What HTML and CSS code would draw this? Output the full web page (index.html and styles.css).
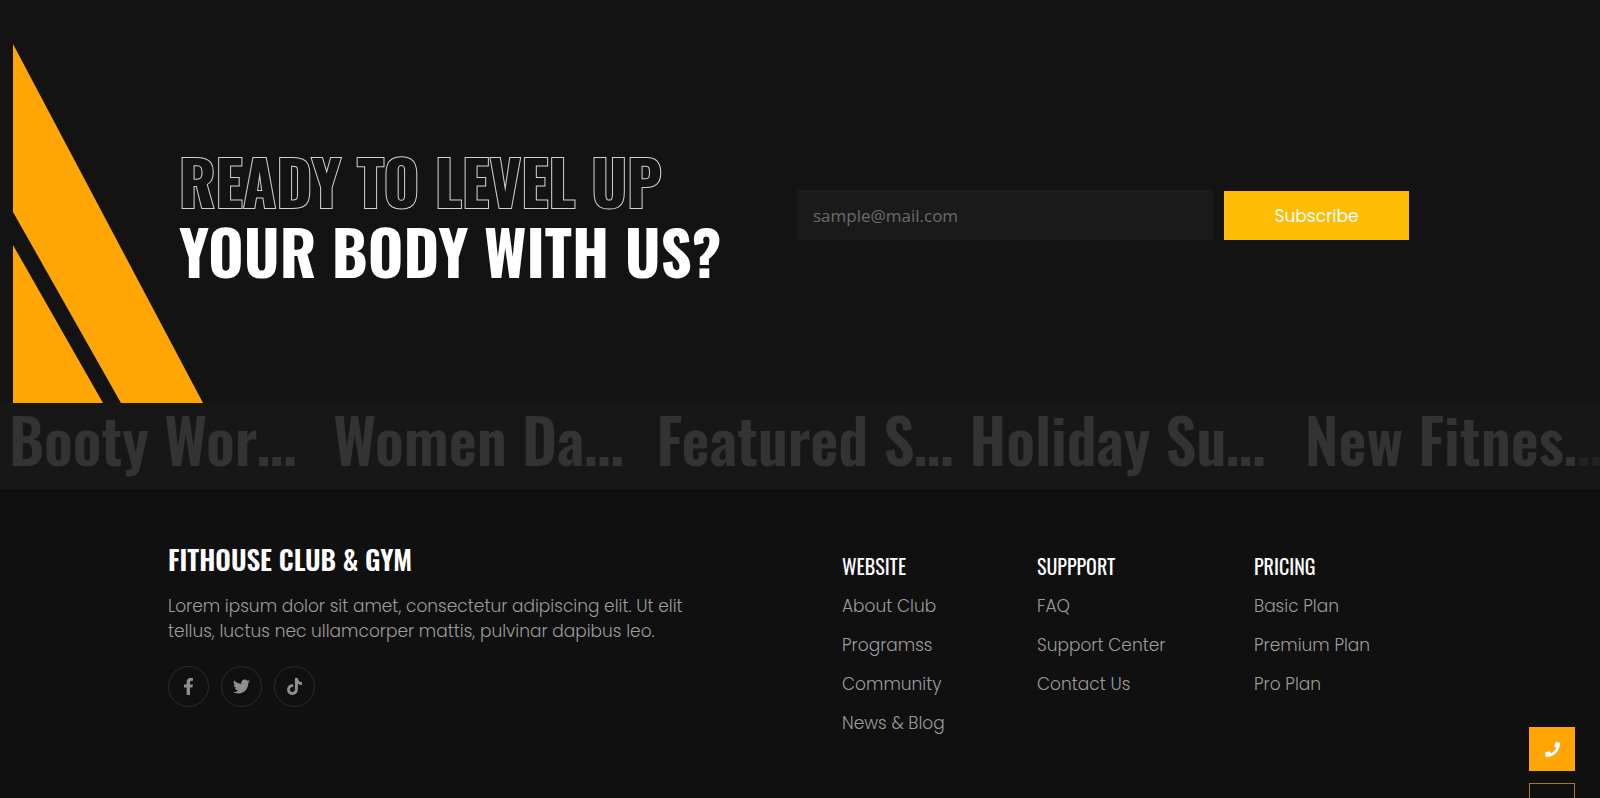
FILE: index.html
```
<!DOCTYPE html>
<html lang="en">
<head>
<meta charset="utf-8">
<title>Fithouse Club &amp; Gym</title>
<link rel="stylesheet" href="styles.css">
</head>
<body>
<section class="cta">
  <svg class="cta-shape" viewBox="0 0 190 359" aria-hidden="true"><path d="M0 0 190 359H108L0 168Z M0 201 90 359H0Z" fill="#ffa605"/></svg>
  <h2 class="cta-title"><span class="outline">READY TO LEVEL UP</span><span>YOUR BODY WITH US?</span></h2>
  <form class="cta-form">
    <input class="email" type="email" placeholder="sample@mail.com" aria-label="Email address">
    <button class="subscribe" type="submit">Subscribe</button>
  </form>
</section>
<div class="ticker">
  <span>Booty Wor…</span><span>Women Da…</span><span>Featured S…</span><span>Holiday Su…</span><span>New Fitnes…</span>
</div>
<footer class="footer">
  <div class="about">
    <h3 class="brand">FITHOUSE CLUB &amp; GYM</h3>
    <p class="blurb">Lorem ipsum dolor sit amet, consectetur adipiscing elit. Ut elit tellus, luctus nec ullamcorper mattis, pulvinar dapibus leo.</p>
    <div class="social">
      <a href="#" aria-label="Facebook"><svg viewBox="0 0 320 512" width="17" height="17"><path d="M279 288l14-93h-89v-60c0-25 12-50 52-50h41V7s-37-7-72-7c-73 0-121 44-121 125v70H23v93h81v224h100V288z"/></svg></a>
      <a href="#" aria-label="Twitter"><svg viewBox="0 0 512 512" width="17" height="17"><path d="M459 152c0 4 0 9 0 14 0 138-106 298-298 298-59 0-115-17-161-47 8 1 16 1 25 1 49 0 94-16 130-45-46-1-85-31-98-73 6 1 13 2 20 2 9 0 19-2 28-4-48-10-84-52-84-103v-1c14 8 30 13 47 13-28-18-47-50-47-87 0-19 5-37 14-53 52 64 129 105 216 110-2-8-3-16-3-24 0-58 47-105 105-105 30 0 58 12 77 33 24-4 46-13 66-25-8 24-24 45-46 58 21-2 42-8 60-16-14 21-31 39-51 54z"/></svg></a>
      <a href="#" aria-label="TikTok"><svg viewBox="0 0 448 512" width="17" height="17"><path d="M448 210c-44 0-87-14-123-39v178A163 163 0 1 1 185 188v90a75 75 0 1 0 52 71V0h88c0 7 1 15 2 22 6 33 26 62 54 80 20 13 43 20 67 20z"/></svg></a>
    </div>
  </div>
  <nav class="links">
    <div class="col"><h4>WEBSITE</h4><a href="#">About Club</a><a href="#">Programss</a><a href="#">Community</a><a href="#">News &amp; Blog</a></div>
    <div class="col"><h4>SUPPPORT</h4><a href="#">FAQ</a><a href="#">Support Center</a><a href="#">Contact Us</a></div>
    <div class="col"><h4>PRICING</h4><a href="#">Basic Plan</a><a href="#">Premium Plan</a><a href="#">Pro Plan</a></div>
  </nav>
</footer>
<aside class="float">
  <a class="call" href="#" aria-label="Call us"><svg viewBox="0 0 512 512" width="15" height="15"><path d="M493 25L389 1c-11-3-23 3-27 14l-48 112c-4 10-1 21 7 28l61 50c-36 76-98 140-177 177l-50-61c-7-8-18-11-28-7L15 362c-11 4-17 16-14 27l24 104c2 11 12 19 23 19 256 0 464-207 464-464 0-11-8-21-19-23z"/></svg></a>
  <a class="up" href="#" aria-label="Back to top"></a>
</aside>
</body>
</html>
```
FILE: styles.css
```
* { box-sizing: border-box; }
body { margin: 0; background: #101010; color: #fff; font-family: Poppins, Inter, sans-serif; font-size: 17px; overflow: hidden; }
h2, h3, h4, p { margin: 0; }
a { color: inherit; text-decoration: none; }
.cta { position: relative; display: grid; grid-template-columns: 618fr 803fr; align-items: center; background: #131313; padding: 146px 0 117px 179px; }
.cta-shape { position: absolute; left: 13px; bottom: 0; width: 190px; height: 359px; }
.cta-title { position: relative; display: flex; flex-direction: column; min-width: 0; font: bold 61px/70px Oswald, "Roboto Condensed", sans-serif; white-space: nowrap; }
.outline { color: #131313; -webkit-text-stroke: 2px #d0d0d0; paint-order: stroke fill; }
.cta-form { display: flex; gap: 11px; align-items: flex-end; width: 612px; max-width: 100%; margin-bottom: 3px; }
.email { flex: 1; min-width: 0; height: 50px; padding: 2px 16px 0; border: 0; background: #1a1a1a; color: #fff; font: 17px "Open Sans", sans-serif; }
.email::placeholder { color: #6b6b6b; opacity: 1; }
.subscribe { width: 185px; height: 49px; padding: 2px 0 0; border: 0; background: #ffbc05; color: #fff; font: 17px Poppins, Inter, sans-serif; }
.ticker { position: relative; display: grid; grid-template-columns: 324fr 323fr 313fr 335fr 295fr; padding: 0 0 14px 9px; background: #171717; color: #333; font: 600 61px/72px Oswald, "Roboto Condensed", sans-serif; white-space: nowrap; }
.ticker span { min-width: 0; }
.ticker::after { content: ""; position: absolute; top: 0; right: 0; bottom: 0; width: 24px; background: rgba(23, 23, 23, .6); }
.footer { display: grid; grid-template-columns: 674fr 758fr; padding: 52px 0 55px 168px; color: #9c9c9c; font-weight: 300; }
.brand { color: #fff; font: 600 27px/36px Oswald, "Roboto Condensed", sans-serif; }
.blurb { max-width: 530px; margin-top: 17px; line-height: 25px; }
.social { display: flex; gap: 12px; margin-top: 22px; }
.social a { display: grid; place-items: center; width: 41px; height: 41px; border: 1px solid #2b2b2b; border-radius: 50%; }
.social svg { fill: #8f8f8f; }
.links { display: grid; grid-template-columns: 195fr 217fr 346fr; padding-top: 11px; }
.col { display: flex; flex-direction: column; gap: 13px; line-height: 26px; }
.col h4 { color: #fff; font: 20px/28px Oswald, "Roboto Condensed", sans-serif; }
.float { position: fixed; top: 727px; right: 25px; display: grid; gap: 12px; }
.call, .up { display: grid; place-items: center; width: 46px; height: 44px; background: #ffa605; }
.call svg { fill: #fff; }
.up { background: none; border: 1px solid #a97828; }
```
